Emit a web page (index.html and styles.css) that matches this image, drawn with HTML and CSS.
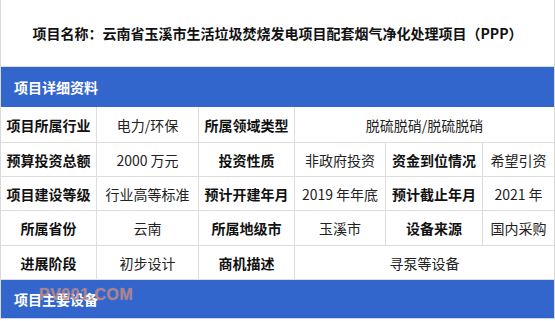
FILE: index.html
```html
<!DOCTYPE html>
<html lang="zh-CN">
<head>
<meta charset="utf-8">
<title>项目详细资料</title>
<link rel="stylesheet" href="styles.css">
</head>
<body>
<div class="page">
  <div class="title">项目名称：云南省玉溪市生活垃圾焚烧发电项目配套烟气净化处理项目（PPP）</div>
  <div class="bar">项目详细资料</div>
  <div class="grid">
    <div class="cell label">项目所属行业</div>
    <div class="cell">电力/环保</div>
    <div class="cell label">所属领域类型</div>
    <div class="cell span3">脱硫脱硝/脱硫脱硝</div>

    <div class="cell label">预算投资总额</div>
    <div class="cell">2000 万元</div>
    <div class="cell label">投资性质</div>
    <div class="cell">非政府投资</div>
    <div class="cell label">资金到位情况</div>
    <div class="cell">希望引资</div>

    <div class="cell label">项目建设等级</div>
    <div class="cell">行业高等标准</div>
    <div class="cell label">预计开建年月</div>
    <div class="cell">2019 年年底</div>
    <div class="cell label">预计截止年月</div>
    <div class="cell">2021 年</div>

    <div class="cell label">所属省份</div>
    <div class="cell">云南</div>
    <div class="cell label">所属地级市</div>
    <div class="cell">玉溪市</div>
    <div class="cell label">设备来源</div>
    <div class="cell">国内采购</div>

    <div class="cell label">进展阶段</div>
    <div class="cell">初步设计</div>
    <div class="cell label">商机描述</div>
    <div class="cell span3">寻泵等设备</div>
  </div>
  <div class="bar bar-bottom">项目主要设备<span class="watermark">PV001.COM</span></div>
</div>
</body>
</html>
```

FILE: styles.css
```css
html, body {
  margin: 0;
  padding: 0;
  background: #ffffff;
}

body {
  font-family: "Noto Sans CJK SC", "Liberation Sans", sans-serif;
  font-size: 14px;
  color: #111;
}

.page {
  width: 555px;
  box-sizing: border-box;
  border-left: 1px solid #d9d9d9;
  border-right: 1px solid #d9d9d9;
}

.title {
  height: 66px;
  border-bottom: 1px solid #dcdcdc;
  display: flex;
  align-items: center;
  justify-content: center;
  font-weight: bold;
  font-size: 14px;
  color: #111;
  letter-spacing: 0;
}

.bar {
  height: 40px;
  background: #3366cc;
  color: #ffffff;
  font-weight: bold;
  font-size: 14px;
  display: flex;
  align-items: center;
  padding-left: 13px;
}

.bar-bottom {
  position: relative;
  height: 38px;
  border-bottom: 1px solid #c9d4ee;
}

.grid {
  display: grid;
  grid-template-columns: 95px 101px 95px 90px 96px 71px;
  grid-template-rows: 35px 33px 33px 34px 33px;
  gap: 1px;
  background: #dddddd;
  border-bottom: 1px solid #dddddd;
}

.cell {
  background: #ffffff;
  display: flex;
  align-items: center;
  justify-content: center;
  white-space: nowrap;
  color: #222;
  font-size: 14px;
}

.label {
  font-weight: bold;
  color: #111;
}

.span3 {
  grid-column: span 3;
}

.watermark {
  position: absolute;
  left: 38px;
  top: 6px;
  font-family: "Liberation Sans", sans-serif;
  font-weight: bold;
  font-size: 16px;
  color: rgba(226, 120, 90, 0.55);
  text-shadow: 0 0 1px rgba(180, 180, 180, 0.6);
  letter-spacing: 0.5px;
}
```
